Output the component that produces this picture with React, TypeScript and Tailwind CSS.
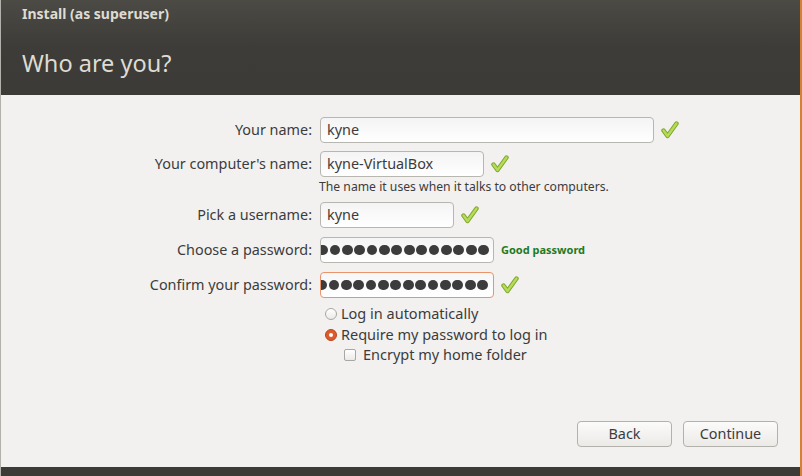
import React from "react";

const font = { fontFamily: '"Noto Sans", "Open Sans", "DejaVu Sans", sans-serif' };

function Check() {
  return (
    <svg width="18" height="18" viewBox="0 0 18 18" className="shrink-0">
      <path
        d="M2.5 9.5 L6.5 15 L15.5 2.5"
        fill="none"
        stroke="#7fa52c"
        strokeWidth="4.4"
        strokeLinecap="round"
        strokeLinejoin="round"
      />
      <path
        d="M2.5 9.5 L6.5 15 L15.5 2.5"
        fill="none"
        stroke="#b4dc58"
        strokeWidth="2.4"
        strokeLinecap="round"
        strokeLinejoin="round"
      />
    </svg>
  );
}

function Field({
  label,
  width,
  value,
  focus = false,
  password = false,
  children,
}: {
  label: string;
  width: string;
  value?: string;
  focus?: boolean;
  password?: boolean;
  children?: React.ReactNode;
}) {
  return (
    <div className="flex items-center h-[26px]">
      <div className="w-[311px] text-right text-[14.4px] text-[#3c3c3c] whitespace-nowrap">{label}</div>
      <div
        className={
          focus
            ? "ml-2 h-[26px] rounded-[4px] border border-[#e9946c] bg-gradient-to-b from-[#f7f7f7] to-white flex items-center overflow-hidden " + width
            : "ml-2 h-[26px] rounded-[4px] border border-[#b8b6b1] bg-gradient-to-b from-[#f4f4f4] to-white flex items-center overflow-hidden " + width
        }
      >
        {password ? (
          <div className="flex-1 flex justify-end items-center overflow-hidden pr-[4px]">
            <div className="flex items-center gap-[1.6px] shrink-0">
              {Array.from({ length: 14 }).map((_, i) => (
                <span key={i} className="block w-[10.8px] h-[10.8px] rounded-full bg-[#3c3c3c]" />
              ))}
            </div>
            {focus && <span className="block w-px h-[16px] bg-[#222] ml-[1px]" />}
          </div>
        ) : (
          <span className="pl-[6px] text-[14.4px] text-[#3c3c3c]">{value}</span>
        )}
      </div>
      {children}
    </div>
  );
}

export default function App() {
  return (
    <div
      className="w-[802px] h-[476px] flex flex-col bg-[#f2f1f0] border-l border-[#b3b1ac] border-r-2 border-r-[#d5812f] overflow-hidden"
      style={font}
    >
      {/* Header */}
      <div className="h-[95px] shrink-0 bg-gradient-to-b from-[#4c4a45] via-[#3d3c38] to-[#3c3b37] pl-[21px]">
        <div className="pt-[4px] text-[14px] font-bold text-[#dfdbd2] leading-[20px]">
          Install (as superuser)
        </div>
        <div className="mt-[23px] text-[23.5px] text-[#dfdbd2] leading-[32px]">Who are you?</div>
      </div>

      {/* Body */}
      <div className="flex-1 flex flex-col pt-[22px]">
        <Field label="Your name:" width="w-[334px]" value="kyne">
          <div className="ml-[7px]">
            <Check />
          </div>
        </Field>
        <div className="mt-[8px]">
          <Field label="Your computer's name:" width="w-[164px]" value="kyne-VirtualBox">
            <div className="ml-[7px]">
              <Check />
            </div>
          </Field>
        </div>
        <div className="pl-[318px] mt-[3px] text-[12.2px] text-[#3c3c3c] leading-[14px]">
          The name it uses when it talks to other computers.
        </div>
        <div className="mt-[8px]">
          <Field label="Pick a username:" width="w-[134px]" value="kyne">
            <div className="ml-[7px]">
              <Check />
            </div>
          </Field>
        </div>
        <div className="mt-[9px]">
          <Field label="Choose a password:" width="w-[174px]" password>
            <span className="ml-[7px] text-[11px] font-bold text-[#1e7a1e]">Good password</span>
          </Field>
        </div>
        <div className="mt-[9px]">
          <Field label="Confirm your password:" width="w-[174px]" password focus>
            <div className="ml-[7px]">
              <Check />
            </div>
          </Field>
        </div>

        <div className="mt-[5px] pl-[324px] flex flex-col text-[14.5px] text-[#3c3c3c]">
          <div className="flex items-center h-[21px]">
            <span className="w-[12px] h-[12px] rounded-full border border-[#a9a7a2] bg-gradient-to-b from-white to-[#ebeae8]" />
            <span className="ml-[4px]">Log in automatically</span>
          </div>
          <div className="flex items-center h-[21px]">
            <span className="w-[12px] h-[12px] rounded-full bg-[#dd5a2c] border border-[#b8461f] flex items-center justify-center">
              <span className="w-[4px] h-[4px] rounded-full bg-white" />
            </span>
            <span className="ml-[4px]">Require my password to log in</span>
          </div>
          <div className="flex items-center h-[20px] pl-[19px]">
            <span className="w-[12px] h-[12px] rounded-[2px] border border-[#a9a7a2] bg-gradient-to-b from-white to-[#ebeae8]" />
            <span className="ml-[7px]">Encrypt my home folder</span>
          </div>
        </div>

        <div className="mt-auto flex justify-end gap-[11px] pr-[22px] pb-[20px]">
          <button className="w-[95px] h-[26px] rounded-[4px] border border-[#b3b1ac] bg-gradient-to-b from-[#fbfbfa] to-[#eceae7] text-[14.4px] text-[#3c3c3c]">
            Back
          </button>
          <button className="w-[95px] h-[26px] rounded-[4px] border border-[#b3b1ac] bg-gradient-to-b from-[#fbfbfa] to-[#eceae7] text-[14.4px] text-[#3c3c3c]">
            Continue
          </button>
        </div>
      </div>

      {/* Bottom band */}
      <div className="h-[9px] shrink-0 bg-[#3c3b37]" />
    </div>
  );
}
